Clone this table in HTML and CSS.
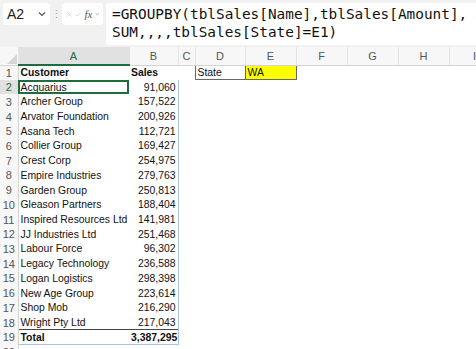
FILE: index.html
```html
<!DOCTYPE html>
<html lang="en">
<head>
    <meta charset="UTF-8">
    <title>GROUPBY</title>
    <link rel="stylesheet" href="styles.css">
</head>
<body>

    <!-- formula bar -->
    <div class="toolbar">
        <div class="name-box">
            <span>A2</span>
            <svg class="chev" width="8" height="6" viewBox="0 0 8 6"><path d="M1 1.5 L4 4.5 L7 1.5" fill="none" stroke="#555" stroke-width="1.2"/></svg>
        </div>
        <div class="grip">&#8942;</div>
        <div class="fx-box">
            <svg width="9" height="9" viewBox="0 0 9 9"><path d="M1 1 L8 8 M8 1 L1 8" stroke="#c4c4c4" stroke-width="1.1"/></svg>
            <svg width="11" height="9" viewBox="0 0 11 9"><path d="M1 4.5 L4 7.5 L10 1" fill="none" stroke="#c4c4c4" stroke-width="1.1"/></svg>
            <span class="fx">fx</span>
            <svg class="chev" width="8" height="6" viewBox="0 0 8 6"><path d="M1 1.5 L4 4.5 L7 1.5" fill="none" stroke="#888" stroke-width="1.1"/></svg>
        </div>
        <div class="formula">=GROUPBY(tblSales[Name],tblSales[Amount],<br>SUM,,,,tblSales[State]=E1)</div>
    </div>

    <!-- grid -->
    <div class="sheet-wrap">
        <table class="sheet">
            <colgroup>
                <col class="c-row"><col class="c-a"><col class="c-b"><col class="c-c"><col class="c-d">
                <col class="c-e"><col class="c-f"><col class="c-g"><col class="c-h"><col class="c-i">
            </colgroup>
            <thead>
                <tr>
                    <th class="corner"><svg width="10" height="10" viewBox="0 0 10 10"><path d="M10 0 L10 10 L0 10 Z" fill="#d6d6d6"/></svg></th>
                    <th class="active">A</th><th>B</th><th>C</th><th>D</th><th>E</th><th>F</th><th>G</th><th>H</th><th>I</th>
                </tr>
            </thead>
            <tbody id="rows">
                <tr><th>1</th><td class="bold">Customer</td><td class="bold">Sales</td><td></td><td class="box">State</td><td class="box crit">WA</td><td></td><td></td><td></td><td></td></tr>
            </tbody>
        </table>
    </div>

    <script>
        const data = [
            ['Acquarius', '91,060'],
            ['Archer Group', '157,522'],
            ['Arvator Foundation', '200,926'],
            ['Asana Tech', '112,721'],
            ['Collier Group', '169,427'],
            ['Crest Corp', '254,975'],
            ['Empire Industries', '279,763'],
            ['Garden Group', '250,813'],
            ['Gleason Partners', '188,404'],
            ['Inspired Resources Ltd', '141,981'],
            ['JJ Industries Ltd', '251,468'],
            ['Labour Force', '96,302'],
            ['Legacy Technology', '236,588'],
            ['Logan Logistics', '298,398'],
            ['New Age Group', '223,614'],
            ['Shop Mob', '216,290'],
            ['Wright Pty Ltd', '217,043']
        ];
        const body = document.getElementById('rows');
        const blanks = '<td></td>'.repeat(7);

        data.forEach((row, i) => {
            const n = i + 2;
            const tr = document.createElement('tr');
            if (n === 2) tr.classList.add('active');
            tr.innerHTML = `<th>${n}</th><td class="${n === 2 ? 'selected' : ''}">${row[0]}</td><td class="num edge">${row[1]}</td>` + blanks;
            body.appendChild(tr);
        });

        // 합계 행
        const total = document.createElement('tr');
        total.classList.add('total');
        total.innerHTML = `<th>19</th><td class="bold">Total</td><td class="bold num edge">3,387,295</td>` + blanks;
        body.appendChild(total);

        const last = document.createElement('tr');
        last.innerHTML = '<th>20</th><td></td><td></td>' + blanks;
        body.appendChild(last);
    </script>
</body>
</html>
```

FILE: styles.css
```css
body {
    margin: 0;
    padding: 0;
    background-color: #fff;
    font-family: 'Liberation Sans', Arial, sans-serif;
    overflow: hidden;
    width: 476px;
    height: 349px;
}

.toolbar {
    display: flex;
    align-items: flex-start;
    height: 47px;
    padding: 3px 0 0 3px;
    box-sizing: border-box;
    background-color: #f1f1f1;
}

.name-box {
    display: flex;
    align-items: center;
    justify-content: space-between;
    width: 47px;
    height: 22px;
    padding: 0 4px 0 4px;
    box-sizing: border-box;
    background-color: #fff;
    border-radius: 3px;
    font-size: 14px;
    color: #222;
}

.grip {
    width: 12px;
    text-align: center;
    font-size: 11px;
    line-height: 22px;
    color: #999;
}

.fx-box {
    display: flex;
    align-items: center;
    gap: 3px;
    width: 41px;
    height: 22px;
    padding: 0 3px 0 5px;
    box-sizing: border-box;
    background-color: #fff;
    border-radius: 3px;
}

.fx {
    font-family: 'Liberation Serif', serif;
    font-style: italic;
    font-size: 11px;
    color: #555;
}

.formula {
    flex: 1;
    height: 42px;
    margin-left: 3px;
    padding: 2px 0 0 6px;
    box-sizing: border-box;
    background-color: #fff;
    border-radius: 3px 0 0 3px;
    font-family: 'DejaVu Sans Mono', monospace;
    font-size: 14.4px;
    line-height: 18px;
    color: #111;
    white-space: nowrap;
}

.sheet-wrap {
    width: 476px;
    overflow: hidden;
}

.sheet {
    border-collapse: collapse;
    table-layout: fixed;
    width: 500px;
    font-size: 10.4px;
    color: #111;
}

.c-row { width: 18px; }
.c-a { width: 111px; }
.c-b { width: 49px; }
.c-c { width: 17px; }
.c-d { width: 50px; }
.c-e { width: 51px; }
.c-f { width: 51px; }
.c-g { width: 51px; }
.c-h { width: 51px; }
.c-i { width: 51px; }

thead th {
    height: 17px;
    padding: 0;
    background-color: #f7f7f7;
    border-right: 1px solid #e4e4e4;
    border-bottom: 1px solid #d4d4d4;
    font-weight: normal;
    font-size: 11px;
    color: #555;
}

thead th.active {
    background-color: #e1e1e1;
    color: #1d6d3f;
    border-bottom: 2px solid #1d6d3f;
}

.corner {
    text-align: right;
    vertical-align: bottom;
}

.corner svg {
    display: block;
    margin: 0 1px 1px auto;
}

tbody tr {
    height: 14.72px;
}

tbody th {
    padding: 0;
    background-color: #f7f7f7;
    border-right: 1px solid #d4d4d4;
    font-weight: normal;
    font-size: 11px;
    color: #555;
    text-align: center;
}

tbody tr.active th {
    background-color: #e1e1e1;
    color: #1d6d3f;
}

td {
    padding: 0 2px;
    white-space: nowrap;
    overflow: hidden;
}

.bold {
    font-weight: bold;
}

.num {
    text-align: right;
}

.edge {
    border-right: 1px solid #a9c1e6;
}

.selected {
    outline: 2px solid #1d6d3f;
    outline-offset: -2px;
}

.total td:nth-of-type(1),
.total td:nth-of-type(2) {
    border-top: 1px solid #444;
    border-bottom: 1px solid #a9c1e6;
}

.box {
    border: 1px solid #666;
}

.crit {
    background-color: #ffff00;
}
```
